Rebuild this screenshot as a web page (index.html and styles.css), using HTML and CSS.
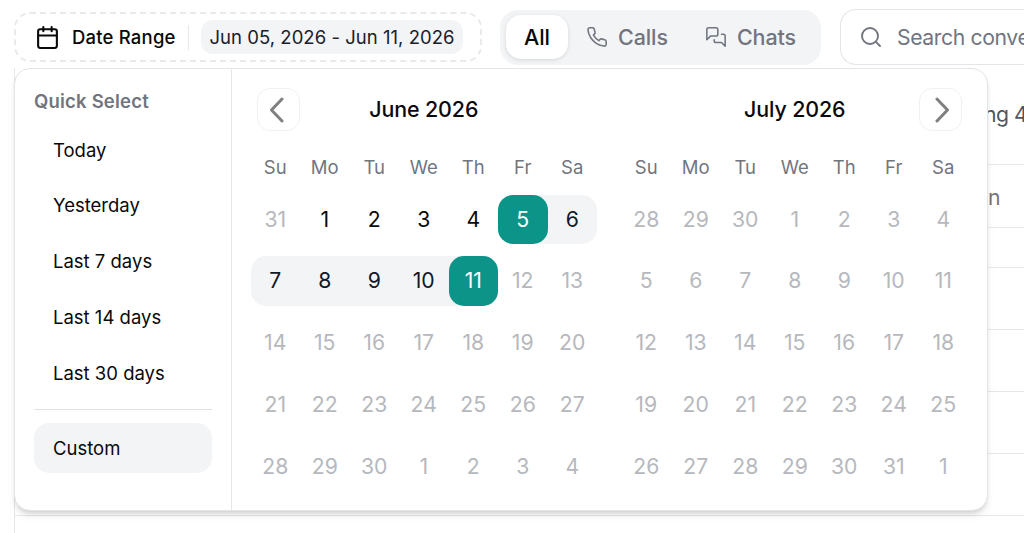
FILE: index.html
```html
<!DOCTYPE html>
<html lang="en">
<head>
    <meta charset="UTF-8">
    <meta name="viewport" content="width=device-width, initial-scale=1.0">
    <title>Conversations</title>
    <link rel="stylesheet" href="styles.css">
</head>
<body>

    <div class="toolbar">
        <button class="date-trigger">
            <svg class="icon-calendar" viewBox="0 0 24 24"><path d="M8 2v4M16 2v4M3 10h18"/><rect x="3" y="4" width="18" height="18" rx="2"/></svg>
            <span class="date-label">Date Range</span>
            <span class="date-value">Jun 05, 2026 - Jun 11, 2026</span>
        </button>

        <div class="tabs">
            <button class="tab active">All</button>
            <button class="tab">
                <svg viewBox="0 0 24 24"><path d="M22 16.92v3a2 2 0 0 1-2.18 2 19.79 19.79 0 0 1-8.63-3.07 19.5 19.5 0 0 1-6-6 19.79 19.79 0 0 1-3.07-8.67A2 2 0 0 1 4.11 2h3a2 2 0 0 1 2 1.72 12.84 12.84 0 0 0 .7 2.81 2 2 0 0 1-.45 2.11L8.09 9.91a16 16 0 0 0 6 6l1.27-1.27a2 2 0 0 1 2.11-.45 12.84 12.84 0 0 0 2.81.7A2 2 0 0 1 22 16.92z"/></svg>
                Calls
            </button>
            <button class="tab chats">
                <svg viewBox="0 0 24 24"><path d="M14 9a2 2 0 0 1-2 2H6l-4 4V4a2 2 0 0 1 2-2h8a2 2 0 0 1 2 2z"/><path d="M18 9h2a2 2 0 0 1 2 2v11l-4-4h-6a2 2 0 0 1-2-2v-1"/></svg>
                Chats
            </button>
        </div>

        <div class="search">
            <svg viewBox="0 0 24 24"><circle cx="11" cy="11" r="8"/><path d="m21 21-4.3-4.3"/></svg>
            <span>Search conve</span>
        </div>
    </div>

    <!-- Table behind the picker -->
    <div class="table">
        <div class="table-info">ng 4</div>
        <div class="table-head">n</div>
        <div class="table-sub"></div>
        <div class="table-row"></div>
        <div class="table-row"></div>
        <div class="table-row"></div>
        <div class="table-row"></div>
        <div class="table-rest"></div>
    </div>

    <div class="popover">
        <div class="quick">
            <h2>Quick Select</h2>
            <button>Today</button>
            <button>Yesterday</button>
            <button>Last 7 days</button>
            <button>Last 14 days</button>
            <button>Last 30 days</button>
            <hr>
            <button class="selected">Custom</button>
        </div>

        <div class="months">
            <div class="month">
                <div class="month-head">
                    <button class="nav prev"><svg viewBox="0 0 15 26"><path d="M13 2 2.5 13 13 24"/></svg></button>
                    <h3>June 2026</h3>
                    <span></span>
                </div>
                <div class="week-names">
                    <span>Su</span><span>Mo</span><span>Tu</span><span>We</span><span>Th</span><span>Fr</span><span>Sa</span>
                </div>
                <div class="days">
                    <span class="off">31</span><span>1</span><span>2</span><span>3</span><span>4</span><span class="range first"><b>5</b></span><span class="range last">6</span>
                    <span class="range first">7</span><span class="range">8</span><span class="range">9</span><span class="range">10</span><span class="range last"><b>11</b></span><span class="off">12</span><span class="off">13</span>
                    <span class="off">14</span><span class="off">15</span><span class="off">16</span><span class="off">17</span><span class="off">18</span><span class="off">19</span><span class="off">20</span>
                    <span class="off">21</span><span class="off">22</span><span class="off">23</span><span class="off">24</span><span class="off">25</span><span class="off">26</span><span class="off">27</span>
                    <span class="off">28</span><span class="off">29</span><span class="off">30</span><span class="off">1</span><span class="off">2</span><span class="off">3</span><span class="off">4</span>
                </div>
            </div>

            <div class="month">
                <div class="month-head">
                    <span></span>
                    <h3>July 2026</h3>
                    <button class="nav next"><svg viewBox="0 0 15 26"><path d="m2 2 10.500 11L2 24"/></svg></button>
                </div>
                <div class="week-names">
                    <span>Su</span><span>Mo</span><span>Tu</span><span>We</span><span>Th</span><span>Fr</span><span>Sa</span>
                </div>
                <div class="days disabled">
                    <span>28</span><span>29</span><span>30</span><span>1</span><span>2</span><span>3</span><span>4</span>
                    <span>5</span><span>6</span><span>7</span><span>8</span><span>9</span><span>10</span><span>11</span>
                    <span>12</span><span>13</span><span>14</span><span>15</span><span>16</span><span>17</span><span>18</span>
                    <span>19</span><span>20</span><span>21</span><span>22</span><span>23</span><span>24</span><span>25</span>
                    <span>26</span><span>27</span><span>28</span><span>29</span><span>30</span><span>31</span><span>1</span>
                </div>
            </div>
        </div>
    </div>

</body>
</html>
```
FILE: styles.css
```css
* { box-sizing: border-box; }
html { overflow: hidden; }
body { margin: 0; height: 533px; overflow: hidden; position: relative; background: #fff; color: #09090b; font-family: Inter, "Liberation Sans", sans-serif; }
button { font: inherit; color: inherit; background: none; border: 0; padding: 0; margin: 0; }
h2, h3 { margin: 0; }
svg { fill: none; stroke: currentColor; stroke-width: 2; stroke-linecap: round; stroke-linejoin: round; flex: none; }

.toolbar { display: flex; align-items: flex-start; height: 68px; padding: 9px 0 0 14px; }

.date-trigger { display: flex; align-items: center; flex: none; width: 468px; height: 50px; margin-top: 3px; padding-left: 19px; border: 2px dashed #e9eaec; border-radius: 16px; }
.icon-calendar { width: 25px; height: 25px; margin-right: 12px; }
.date-label { width: 117px; height: 25px; line-height: 25px; text-align: left; white-space: nowrap; border-right: 1px solid #e5e7eb; font-size: 18.5px; font-weight: 500; letter-spacing: .2px; }
.date-value { width: 262px; height: 34px; line-height: 34px; margin-left: 12px; border-radius: 12px; background: #f3f4f6; color: #1a202c; font-size: 18.5px; letter-spacing: .03px; white-space: nowrap; }

.tabs { display: flex; flex: none; width: 321px; height: 55px; margin: 1px 0 0 18px; padding: 5px 6px; border-radius: 18px; background: #f3f4f6; }
.tab { display: flex; align-items: center; gap: 10px; margin-left: 18px; padding-bottom: 1px; color: #71757f; font-size: 21.5px; font-weight: 550; letter-spacing: -.1px; }
.tab svg { width: 22px; height: 22px; stroke-width: 1.7; }
.tab.chats { margin-left: 37px; }
.tab.active { width: 62px; height: 44px; margin: 0; justify-content: center; border-radius: 15px; background: #fff; color: #09090b; box-shadow: 0 1px 4px rgba(0, 0, 0, .12); }

.search { display: flex; align-items: center; gap: 14px; flex: 1; min-width: 0; height: 56px; margin-left: 19px; padding-left: 18px; border: 1.5px solid #e4e5e8; border-right: 0; border-radius: 16px 0 0 16px; color: #71757f; font-size: 21.2px; letter-spacing: -.4px; white-space: nowrap; }
.search svg { width: 24px; height: 24px; stroke-width: 1.9; }

.table { height: 480px; margin-left: 14px; border-left: 1px solid #e5e7eb; color: #52555e; font-size: 21.2px; }
.table div { border-bottom: 1px solid #e5e7eb; padding-left: 969px; white-space: nowrap; }
.table .table-info { height: 97px; line-height: 93px; letter-spacing: -.5px; }
.table .table-head { height: 63px; line-height: 64px; padding-left: 973px; color: #71757f; }
.table .table-sub { height: 40px; }
.table .table-row { height: 62px; }
.table .table-rest { border: 0; }

.popover { position: absolute; left: 14px; top: 68px; display: flex; width: 974px; height: 443px; border: 1.5px solid #e4e5e8; border-radius: 16px; background: #fff; box-shadow: 0 6px 9px -2px rgba(0, 0, 0, .1), 0 3px 5px -2px rgba(0, 0, 0, .14); }

.quick { display: flex; flex-direction: column; width: 217px; padding: 20px 19px 0; border-right: 1px solid #e5e7eb; }
.quick h2 { height: 25px; line-height: 25px; margin-bottom: 11px; color: #71757f; font-size: 18.5px; font-weight: 600; letter-spacing: .2px; }
.quick button { height: 49.5px; margin-bottom: 6.2px; padding-left: 19px; border-radius: 15px; text-align: left; font-size: 18.5px; }
.quick hr { width: 100%; margin: 6px 0 13px; border: 0; border-top: 1px solid #e0e2e6; }
.quick .selected { background: #f3f4f6; }

.months { display: flex; gap: 24.5px; padding: 19px 0 0 18.5px; }
.month { width: 346.5px; }
.month-head { display: flex; align-items: center; justify-content: space-between; height: 43px; padding: 0 6px; }
.month-head span { width: 43px; }
.month-head h3 { font-size: 21.4px; font-weight: 550; letter-spacing: -.1px; line-height: 26px; padding-bottom: 1px; }
.nav { display: flex; align-items: center; justify-content: center; width: 43px; height: 43px; border: 1px solid #f0f1f3; border-radius: 13px; color: #808080; }
.nav svg { width: 15px; height: 26px; stroke-width: 3; }
.prev { padding-right: 4px; }
.next { padding-left: 3px; }

.week-names, .days { display: grid; grid-template-columns: repeat(7, 49.5px); text-align: center; }
.week-names { height: 28px; line-height: 28px; margin: 22px 0 13.6px; color: #71757f; font-size: 18.5px; }
.days { grid-auto-rows: 49.5px; row-gap: 12.4px; line-height: 49.5px; font-size: 21.2px; }
.days .off, .disabled { color: #b6b8bd; }
.days .range { background: #f3f4f6; color: #111827; }
.days .first { border-radius: 15px 0 0 15px; }
.days .last { border-radius: 0 15px 15px 0; }
.days b { display: block; border-radius: 15px; background: #0d9488; color: #fff; font-weight: 400; }
```
